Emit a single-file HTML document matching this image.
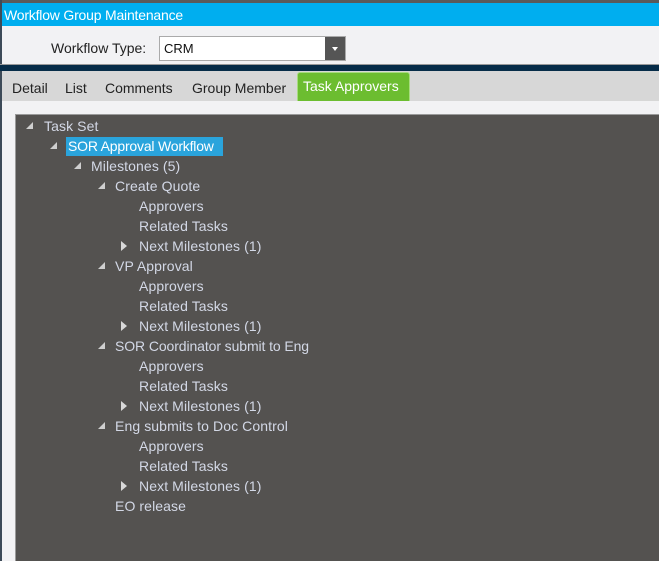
<!DOCTYPE html>
<html><head><style>
*{margin:0;padding:0;box-sizing:border-box}
body{width:659px;height:561px;overflow:hidden;background:#f2f2f4;font-family:"Liberation Sans",Arial,sans-serif;position:relative}
.abs{position:absolute}
.t{position:absolute;font-size:14px;color:#d3d8e6;white-space:nowrap;line-height:16px;letter-spacing:0.1px}
.tri{position:absolute;width:0;height:0;border-left:7px solid transparent;border-bottom:7px solid #cfcfcf}
.arr{position:absolute;width:0;height:0;border-top:5px solid transparent;border-bottom:5px solid transparent;border-left:6px solid #d8d8d8}
.tab{position:absolute;top:80px;font-size:14px;color:#222}
</style></head><body>
<div class="abs" style="left:0;top:0;width:659px;height:3px;background:#5a5a5a"></div>
<div class="abs" style="left:0;top:3px;width:659px;height:23px;background:#00aeef"></div>
<div class="abs" style="left:0;top:0;width:2px;height:561px;background:#3d4a58"></div>
<div class="abs" style="left:4px;top:7px;font-size:14px;color:#fff;letter-spacing:-0.2px">Workflow Group Maintenance</div>
<div class="abs" style="left:2px;top:26px;width:657px;height:38px;background:#f2f2f4"></div>
<div class="abs" style="left:51px;top:40px;font-size:14px;color:#222">Workflow Type:</div>
<div class="abs" style="left:159px;top:36px;width:187px;height:25px;border:1px solid #aaa;background:#fff"></div>
<div class="abs" style="left:164px;top:41px;font-size:13px;color:#111">CRM</div>
<div class="abs" style="left:325px;top:37px;width:20px;height:23px;background:#555"></div>
<div class="abs" style="left:332px;top:47px;border-left:3px solid transparent;border-right:3px solid transparent;border-top:4px solid #fff"></div>
<div class="abs" style="left:0;top:64px;width:659px;height:1px;background:#999"></div>
<div class="abs" style="left:0;top:65px;width:659px;height:6px;background:#062c48"></div>
<div class="abs" style="left:2px;top:71px;width:657px;height:30px;background:#d7d7d7"></div>
<div class="tab" style="left:12px">Detail</div>
<div class="tab" style="left:65px">List</div>
<div class="tab" style="left:105px">Comments</div>
<div class="tab" style="left:192px">Group Member</div>
<div class="abs" style="left:297px;top:72px;width:113px;height:29px;background:#6cbd30;border:1px solid #a8dc80;border-bottom:none;border-radius:3px 3px 0 0"></div>
<div class="abs" style="left:303px;top:78px;font-size:14px;color:#fff">Task Approvers</div>
<div class="abs" style="left:15px;top:114px;width:644px;height:447px;background:#545250;border-left:1px solid #9a9a9a;border-top:1px solid #9a9a9a"></div>
<div class="abs" style="left:66px;top:137px;width:157px;height:19px;background:#2aa4dc"></div>

<div class="tri" style="left:26px;top:122px"></div><div class="t" style="left:44px;top:118px">Task Set</div>
<div class="tri" style="left:50px;top:142px"></div><div class="t" style="left:68px;top:138px;color:#fff;letter-spacing:-0.2px">SOR Approval Workflow</div>
<div class="tri" style="left:74px;top:162px"></div><div class="t" style="left:91px;top:158px">Milestones (5)</div>

<div class="tri" style="left:98px;top:182px"></div><div class="t" style="left:115px;top:178px">Create Quote</div>
<div class="t" style="left:139px;top:198px">Approvers</div>
<div class="t" style="left:139px;top:218px">Related Tasks</div>
<div class="arr" style="left:121px;top:241px"></div><div class="t" style="left:139px;top:238px">Next Milestones (1)</div>

<div class="tri" style="left:98px;top:262px"></div><div class="t" style="left:115px;top:258px">VP Approval</div>
<div class="t" style="left:139px;top:278px">Approvers</div>
<div class="t" style="left:139px;top:298px">Related Tasks</div>
<div class="arr" style="left:121px;top:321px"></div><div class="t" style="left:139px;top:318px">Next Milestones (1)</div>

<div class="tri" style="left:98px;top:342px"></div><div class="t" style="left:115px;top:338px;letter-spacing:-0.1px">SOR Coordinator submit to Eng</div>
<div class="t" style="left:139px;top:358px">Approvers</div>
<div class="t" style="left:139px;top:378px">Related Tasks</div>
<div class="arr" style="left:121px;top:401px"></div><div class="t" style="left:139px;top:398px">Next Milestones (1)</div>

<div class="tri" style="left:98px;top:422px"></div><div class="t" style="left:115px;top:418px">Eng submits to Doc Control</div>
<div class="t" style="left:139px;top:438px">Approvers</div>
<div class="t" style="left:139px;top:458px">Related Tasks</div>
<div class="arr" style="left:121px;top:481px"></div><div class="t" style="left:139px;top:478px">Next Milestones (1)</div>
<div class="t" style="left:115px;top:498px">EO release</div>
</body></html>
